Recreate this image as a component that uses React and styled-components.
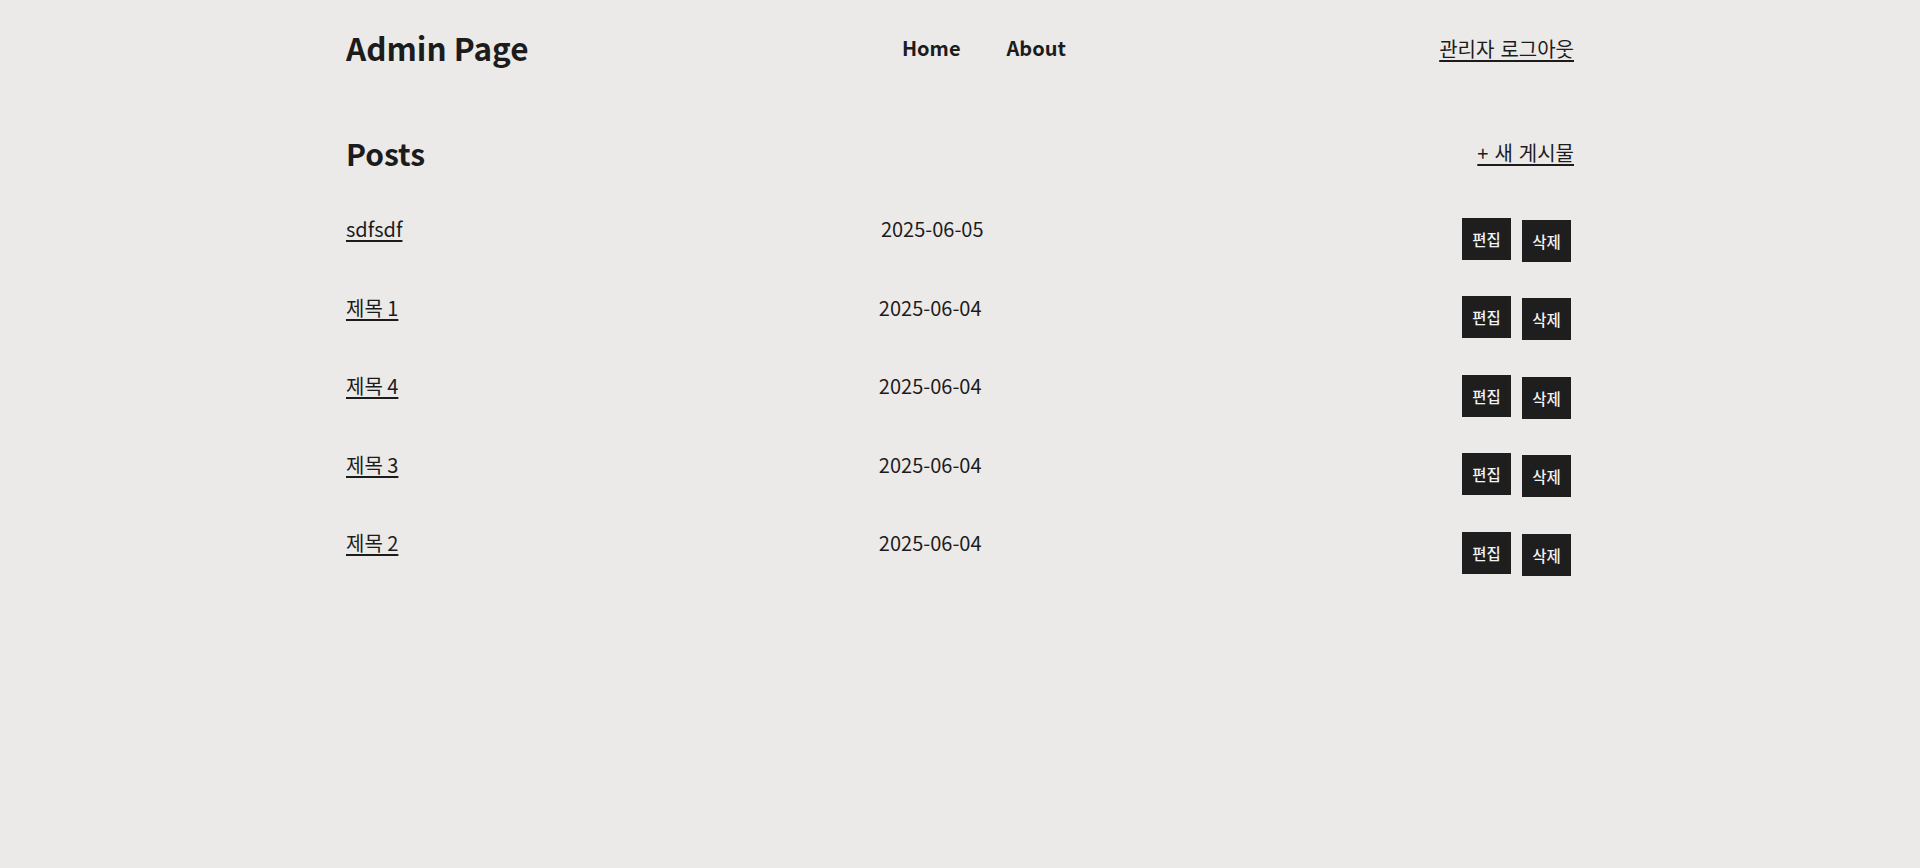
import React from "react";
import styled, { createGlobalStyle } from "styled-components";

const Global = createGlobalStyle`
  html, body { margin: 0; padding: 0; }
  body {
    background: #eceae8;
    color: #1c1c1c;
    font-family: "Noto Sans CJK KR", "Noto Sans", sans-serif;
  }
`;

const Page = styled.div`
  width: 1228px;
  margin: 0 auto;
`;

const Header = styled.header`
  display: flex;
  justify-content: space-between;
  align-items: center;
  height: 96px;
`;

const Logo = styled.h1`
  margin: 0;
  font-size: 31.5px;
  font-weight: 700;
  line-height: 1.2;
`;

const Nav = styled.nav`
  display: flex;
  gap: 46px;
  margin-top: -2px;
`;

const NavLink = styled.a`
  font-size: 20px;
  font-weight: 700;
  color: #1c1c1c;
  text-decoration: none;
`;

const TextLink = styled.a`
  font-size: 20px;
  word-spacing: 1.5px;
  color: #1c1c1c;
  text-decoration: underline;
  text-underline-offset: 3px;
`;

const Main = styled.main`
  padding-top: 38.5px;
`;

const TitleRow = styled.div`
  display: flex;
  justify-content: space-between;
  align-items: center;
  margin-bottom: 43.5px;
`;

const Heading = styled.h2`
  margin: 0;
  font-size: 30px;
  font-weight: 700;
  line-height: 1.2;
`;

const List = styled.ul`
  list-style: none;
  margin: 0;
  padding: 0;
  display: flex;
  flex-direction: column;
  gap: 31px;
`;

const Row = styled.li`
  display: flex;
  justify-content: space-between;
  align-items: flex-start;
`;

const PostTitle = styled.a`
  font-size: 20px;
  line-height: 30px;
  color: #1c1c1c;
  text-decoration: underline;
  text-underline-offset: 3px;
`;

const PostDate = styled.span`
  font-size: 20px;
  line-height: 30px;
`;

const Actions = styled.div`
  display: flex;
  align-items: flex-start;
  gap: 11px;
  padding-right: 3px;
  margin-top: 3.5px;
`;

const ActionButton = styled.button`
  background: #1e1e1e;
  color: #f2f2f2;
  border: none;
  border-radius: 0;
  width: 49px;
  height: 42px;
  padding: 0;
  font-family: "Noto Sans CJK KR", sans-serif;
  font-size: 15.5px;
  font-weight: 500;
  margin-top: ${(p) => (p.$lower ? "2px" : "0")};
  cursor: pointer;
`;

const posts = [
  { title: "sdfsdf", date: "2025-06-05" },
  { title: "제목 1", date: "2025-06-04" },
  { title: "제목 4", date: "2025-06-04" },
  { title: "제목 3", date: "2025-06-04" },
  { title: "제목 2", date: "2025-06-04" },
];

export default function App() {
  return (
    <>
      <Global />
      <Page>
        <Header>
          <Logo>Admin Page</Logo>
          <Nav>
            <NavLink href="#">Home</NavLink>
            <NavLink href="#">About</NavLink>
          </Nav>
          <TextLink href="#">관리자 로그아웃</TextLink>
        </Header>
        <Main>
          <TitleRow>
            <Heading>Posts</Heading>
            <TextLink href="#">+ 새 게시물</TextLink>
          </TitleRow>
          <List>
            {posts.map((p, i) => (
              <Row key={i}>
                <PostTitle href="#">{p.title}</PostTitle>
                <PostDate>{p.date}</PostDate>
                <Actions>
                  <ActionButton>편집</ActionButton>
                  <ActionButton $lower>삭제</ActionButton>
                </Actions>
              </Row>
            ))}
          </List>
        </Main>
      </Page>
    </>
  );
}
